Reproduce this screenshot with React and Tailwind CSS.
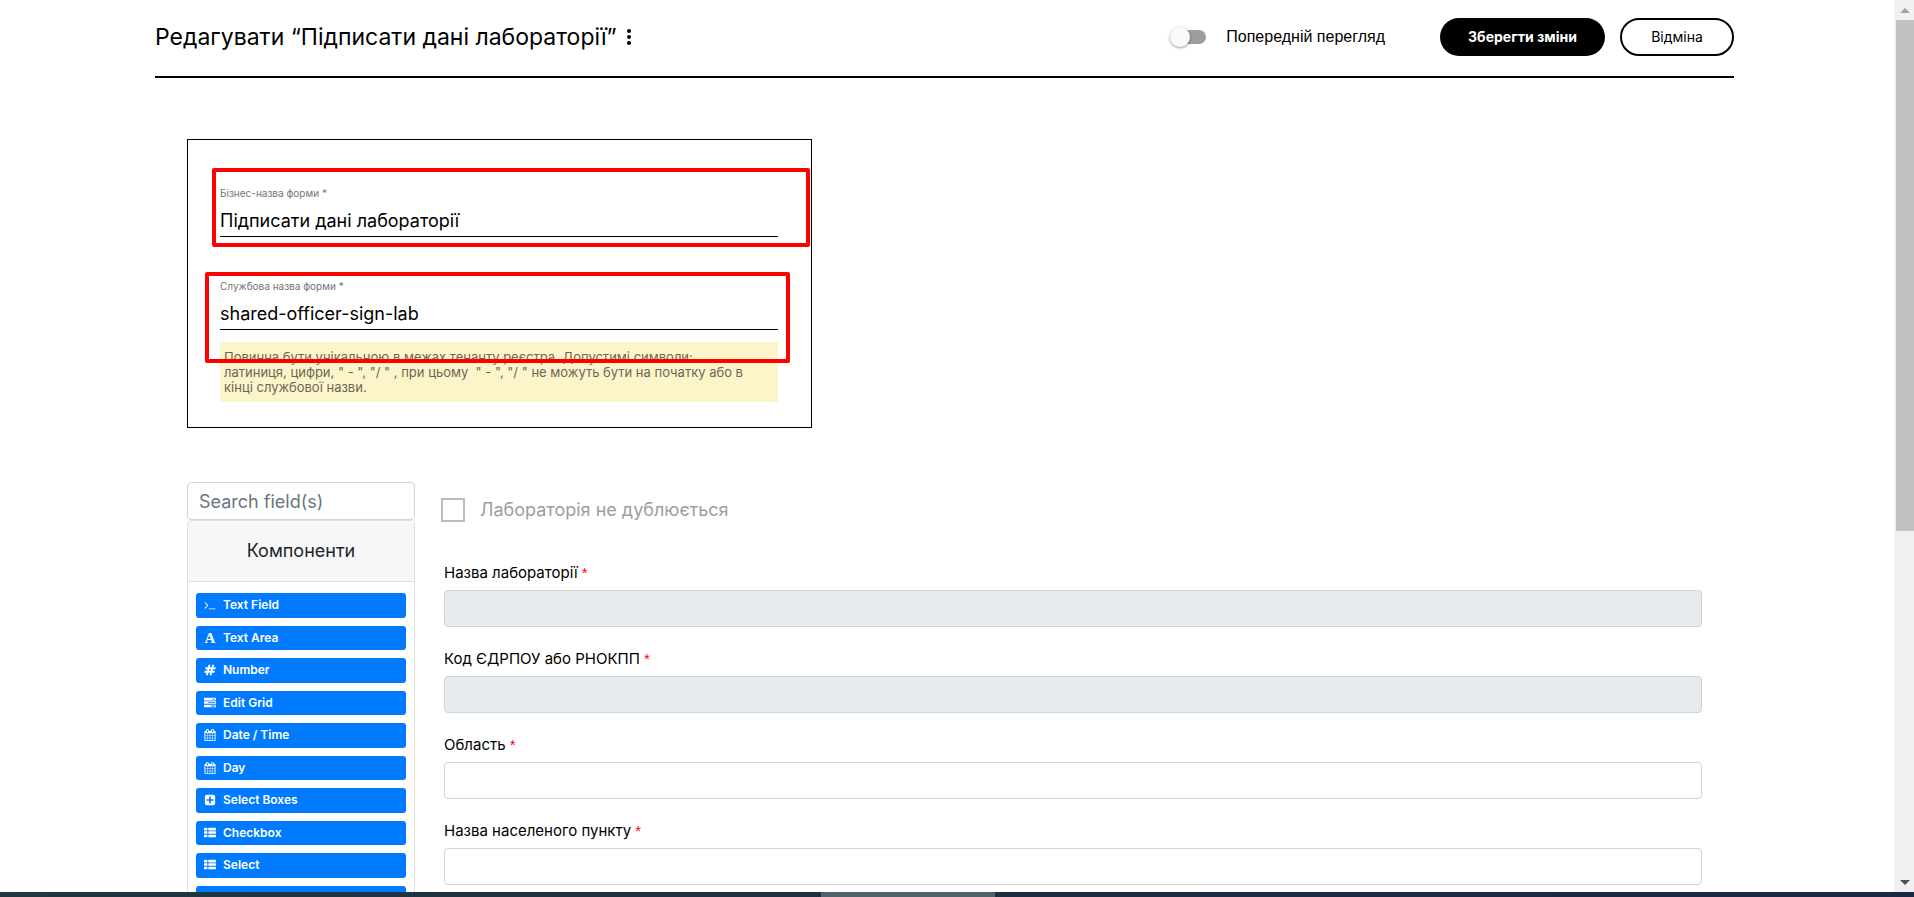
const GLYPHS = {
  terminal:
    "M649 983l-466 466q-10 10-23 10t-23-10l-50-50q-10-10-10-23t10-23l393-393-393-393q-10-10-10-23t10-23l50-50q10-10 23-10t23 10l466 466q10 10 10 23t-10 23zm1079 457v64q0 14-9 23t-23 9h-960q-14 0-23-9t-9-23v-64q0-14 9-23t23-9h960q14 0 23 9t9 23z",
  hashtag:
    "M991 1024l64-256h-254l-64 256h254zm768-504l-56 224q-7 24-31 24h-327l-64 256h311q15 0 25 12 10 14 6 28l-56 224q-5 24-31 24h-327l-81 328q-7 24-31 24h-224q-16 0-26-12-9-12-6-28l78-312h-254l-81 328q-7 24-31 24h-225q-15 0-25-12-9-12-6-28l78-312h-311q-15 0-25-12-9-12-6-28l56-224q7-24 31-24h327l64-256h-311q-15 0-25-12-10-14-6-28l56-224q5-24 31-24h327l81-328q7-24 32-24h224q15 0 25 12 9 12 6 28l-78 312h254l81-328q7-24 32-24h224q15 0 25 12 9 12 6 28l-78 312h311q15 0 25 12 9 12 6 28z",
  tasks:
    "M1024 1408h640v-128h-640v128zm-384-512h1024v-128h-1024v128zm640-512h384v-128h-384v128zm512 832v256q0 26-19 45t-45 19h-1664q-26 0-45-19t-19-45v-256q0-26 19-45t45-19h1664q26 0 45 19t19 45zm0-512v256q0 26-19 45t-45 19h-1664q-26 0-45-19t-19-45v-256q0-26 19-45t45-19h1664q26 0 45 19t19 45zm0-512v256q0 26-19 45t-45 19h-1664q-26 0-45-19t-19-45v-256q0-26 19-45t45-19h1664q26 0 45 19t19 45z",
  calendar:
    "M192 1664h288v-288h-288v288zm352 0h320v-288h-320v288zm-352-352h288v-320h-288v320zm352 0h320v-320h-320v320zm-352-384h288v-288h-288v288zm736 736h320v-288h-320v288zm-384-736h320v-288h-320v288zm768 736h288v-288h-288v288zm-384-352h320v-320h-320v320zm-352-864v-288q0-13-9.5-22.5t-22.5-9.5h-64q-13 0-22.5 9.5t-9.5 22.5v288q0 13 9.5 22.5t22.5 9.5h64q13 0 22.5-9.5t9.5-22.5zm736 864h288v-320h-288v320zm-384-384h320v-288h-320v288zm384 0h288v-288h-288v288zm32-480v-288q0-13-9.5-22.5t-22.5-9.5h-64q-13 0-22.5 9.5t-9.5 22.5v288q0 13 9.5 22.5t22.5 9.5h64q13 0 22.5-9.5t9.5-22.5zm384-64v1280q0 52-38 90t-90 38h-1408q-52 0-90-38t-38-90v-1280q0-52 38-90t90-38h128v-96q0-66 47-113t113-47h64q66 0 113 47t47 113v96h384v-96q0-66 47-113t113-47h64q66 0 113 47t47 113v96h128q52 0 90 38t38 90z",
  plusSquare:
    "M1408 960v-128q0-26-19-45t-45-19h-320v-320q0-26-19-45t-45-19h-128q-26 0-45 19t-19 45v320h-320q-26 0-45 19t-19 45v128q0 26 19 45t45 19h320v320q0 26 19 45t45 19h128q26 0 45-19t19-45v-320h320q26 0 45-19t19-45zm256-544v960q0 119-84.5 203.5t-203.5 84.5h-960q-119 0-203.5-84.5t-84.5-203.5v-960q0-119 84.5-203.5t203.5-84.5h960q119 0 203.5 84.5t84.5 203.5z",
  list:
    "M512 1248v192q0 40-28 68t-68 28h-320q-40 0-68-28t-28-68v-192q0-40 28-68t68-28h320q40 0 68 28t28 68zm0-512v192q0 40-28 68t-68 28h-320q-40 0-68-28t-28-68v-192q0-40 28-68t68-28h320q40 0 68 28t28 68zm1280 512v192q0 40-28 68t-68 28h-960q-40 0-68-28t-28-68v-192q0-40 28-68t68-28h960q40 0 68 28t28 68zm-1280-1024v192q0 40-28 68t-68 28h-320q-40 0-68-28t-28-68v-192q0-40 28-68t68-28h320q40 0 68 28t28 68zm1280 512v192q0 40-28 68t-68 28h-960q-40 0-68-28t-28-68v-192q0-40 28-68t68-28h960q40 0 68 28t28 68zm0-512v192q0 40-28 68t-68 28h-960q-40 0-68-28t-28-68v-192q0-40 28-68t68-28h960q40 0 68 28t28 68z",
};

const COMPONENTS = [
  { name: "Text Field", icon: "terminal" },
  { name: "Text Area", icon: "font" },
  { name: "Number", icon: "hashtag" },
  { name: "Edit Grid", icon: "tasks" },
  { name: "Date / Time", icon: "calendar" },
  { name: "Day", icon: "calendar" },
  { name: "Select Boxes", icon: "plusSquare" },
  { name: "Checkbox", icon: "list" },
  { name: "Select", icon: "list" },
];

const FIELDS = [
  { id: "lab-name", label: "Назва лабораторії", disabled: true },
  { id: "lab-code", label: "Код ЄДРПОУ або РНОКПП", disabled: true },
  { id: "region", label: "Область", disabled: false },
  { id: "city", label: "Назва населеного пункту", disabled: false },
];

function Glyph({ name }) {
  if (name === "font") {
    return (
      <span
        aria-hidden="true"
        className="flex w-3 shrink-0 justify-center font-['Liberation_Serif',serif] text-[15px] leading-4 font-bold"
      >
        A
      </span>
    );
  }
  return (
    <svg viewBox="0 0 1792 1792" className="size-3 shrink-0 fill-current" aria-hidden="true">
      <path d={GLYPHS[name]} />
    </svg>
  );
}

function Header() {
  return (
    <header className="flex h-[78px] items-start justify-between border-b-2 border-black pt-[18px]">
      <div className="flex h-[38px] items-center gap-1">
        <h1 className="text-[23px] leading-7">Редагувати “Підписати дані лабораторії”</h1>
        <button type="button" aria-label="Меню" className="flex h-6 w-4 items-center justify-center">
          <svg viewBox="0 0 4 16" className="h-4 w-1 fill-black">
            <circle cx="2" cy="2" r="2" />
            <circle cx="2" cy="8" r="2" />
            <circle cx="2" cy="14" r="2" />
          </svg>
        </button>
      </div>
      <div className="flex h-[38px] items-center">
        <label className="flex items-center gap-5 font-['Liberation_Sans',Arial,sans-serif] text-base">
          <span className="relative flex h-5 w-9 items-center justify-end">
            <input
              type="checkbox"
              role="switch"
              className="peer h-[14px] w-[34px] appearance-none rounded-full bg-[#9e9e9e]"
            />
            <span className="absolute left-0 size-5 rounded-full bg-[#fafafa] shadow-[0_1px_3px_rgba(0,0,0,0.4)] peer-checked:left-4" />
          </span>
          Попередній перегляд
        </label>
        <button
          type="button"
          className="ml-[55px] h-[38px] w-[165px] rounded-full bg-black text-sm font-bold text-white"
        >
          Зберегти зміни
        </button>
        <button type="button" className="ml-[15px] h-[38px] w-[114px] rounded-full border-2 border-black text-sm">
          Відміна
        </button>
      </div>
    </header>
  );
}

function NameField({ id, label, value }) {
  return (
    <div className="flex flex-col">
      <label htmlFor={id} className="text-[10px] leading-4 text-[#757575]">
        {label} *
      </label>
      <input
        id={id}
        defaultValue={value}
        className="h-9 w-full border-b border-black bg-transparent pt-1 text-lg outline-none"
      />
    </div>
  );
}

function FormNames() {
  return (
    <section className="relative mt-[61px] flex h-[289px] w-full max-w-[625px] flex-col border border-black pt-[45px] pr-[33px] pl-8">
      <NameField id="business-name" label="Бізнес-назва форми" value="Підписати дані лабораторії" />
      <div className="mt-[41px]">
        <NameField id="service-name" label="Службова назва форми" value="shared-officer-sign-lab" />
      </div>
      <p className="mt-3 bg-[#fdf5ca] px-1 pt-2 pb-[7px] text-[13px] leading-[15px] text-[#6a6757]">
        Повинна бути унікальною в межах тенанту реєстра. Допустимі символи:
        <br />
        латиниця, цифри, " - ", "/ " , при цьому&nbsp; " - ", "/ " не можуть бути на початку або в<br />
        кінці службової назви.
      </p>
      <div className="pointer-events-none absolute top-7 right-px left-6 h-[79px] rounded-xs border-4 border-[#ff0000]" />
      <div className="pointer-events-none absolute top-[132px] right-[21px] left-[17px] h-[91px] rounded-xs border-4 border-[#ff0000]" />
    </section>
  );
}

function ComponentPanel() {
  return (
    <aside className="w-[228px] shrink-0">
      <input
        type="search"
        aria-label="Search field(s)"
        placeholder="Search field(s)"
        className="block h-[38px] w-full rounded-sm border border-[#ced4da] px-[11px] text-lg placeholder:text-[#6c757d]"
      />
      <div className="rounded-sm border border-[#dfdfdf]">
        <h2 className="flex h-[61px] items-center justify-center border-b border-[#dfdfdf] bg-[#f7f7f7] text-lg text-[#212529]">
          Компоненти
        </h2>
        <div className="grid h-[336px] auto-rows-fr gap-2 px-2 pt-[11px] pb-2">
          {COMPONENTS.map((c) => (
            <button
              key={c.name}
              type="button"
              className="flex items-center gap-[7px] rounded-[3px] bg-[#007bff] px-2 text-xs font-semibold text-white"
            >
              <Glyph name={c.icon} />
              {c.name}
            </button>
          ))}
          <button type="button" aria-label="Radio" className="rounded-[3px] bg-[#007bff]" />
        </div>
      </div>
    </aside>
  );
}

function FormPreview() {
  return (
    <form className="min-w-0 flex-1 pt-4">
      <label className="flex h-6 items-center gap-[15px] text-lg text-[#9e9e9e]">
        <input type="checkbox" disabled className="size-6 appearance-none border-2 border-[#bdbdbd]" />
        Лабораторія не дублюється
      </label>
      <div className="mt-[41px] flex flex-col gap-[22px] pl-[3px]">
        {FIELDS.map((f) => (
          <div key={f.id} className="flex flex-col gap-[7px]">
            <label htmlFor={f.id} className="text-[15px] leading-5">
              {f.label} <span className="font-['Liberation_Sans',sans-serif] text-[#ff0000]">*</span>
            </label>
            <input
              id={f.id}
              disabled={f.disabled}
              className="h-[37px] w-full rounded-sm border border-[#ced4da] px-3 disabled:bg-[#e7ebee]"
            />
          </div>
        ))}
      </div>
    </form>
  );
}

function ScrollRail() {
  return (
    <div className="flex w-5 shrink-0 flex-col bg-[#f1f1f1] pl-[2px]" aria-hidden="true">
      <div className="flex h-5 items-center justify-center">
        <svg viewBox="0 0 10 5" className="h-[5px] w-[10px] fill-[#a3a3a3]">
          <path d="M0 5L5 0L10 5Z" />
        </svg>
      </div>
      <div className="flex-1">
        <div className="h-3/5 bg-[#c1c1c1]" />
      </div>
      <div className="flex h-5 items-center justify-center">
        <svg viewBox="0 0 10 5" className="h-[5px] w-[10px] fill-[#505050]">
          <path d="M0 0L10 0L5 5Z" />
        </svg>
      </div>
    </div>
  );
}

export default function App() {
  return (
    <div className="flex h-screen flex-col bg-white font-['Inter','Noto_Sans',sans-serif] text-black">
      <div className="flex min-h-0 flex-1">
        <main className="min-w-0 flex-1 overflow-hidden pr-40 pl-[155px]">
          <Header />
          <div className="px-8">
            <FormNames />
            <div className="mt-[54px] flex items-start gap-[26px]">
              <ComponentPanel />
              <FormPreview />
            </div>
          </div>
        </main>
        <ScrollRail />
      </div>
      <div className="flex h-[5px] shrink-0 justify-center bg-linear-to-r from-[#20373f] to-[#1a2844]">
        <div className="mr-[98px] w-[174px] bg-[#4f636b]" />
      </div>
    </div>
  );
}
